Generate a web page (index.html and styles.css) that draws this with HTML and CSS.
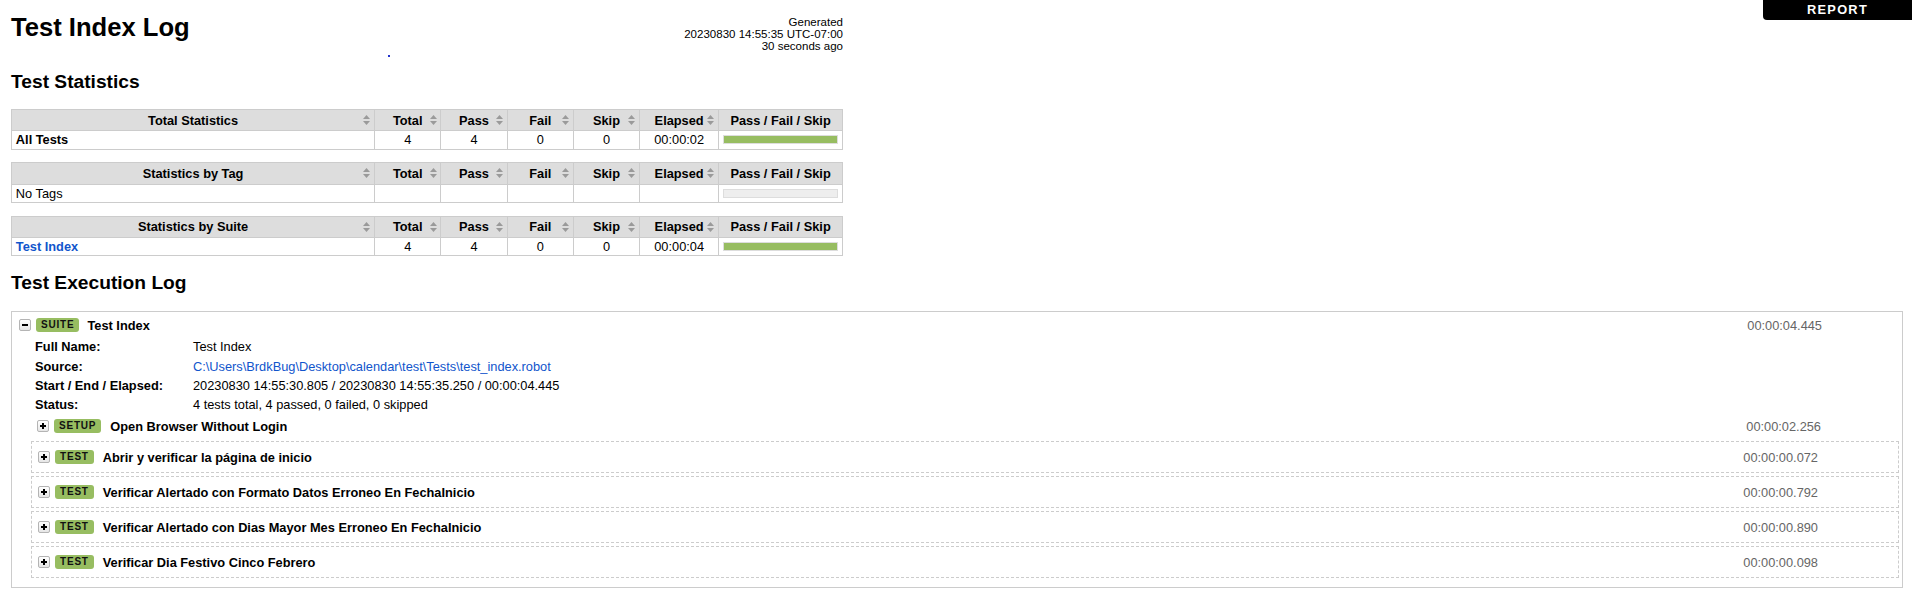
FILE: index.html
```html
<!DOCTYPE html>
<html lang="en">
<head>
<meta charset="utf-8">
<title>Test Index Log</title>
<link rel="stylesheet" href="styles.css">
</head>
<body>
<div class="top-right"><a class="report-link" href="#">REPORT</a></div>

<div class="header">
  <h1>Test Index Log</h1>
  <span class="dot"></span>
  <div class="generated">Generated<br>20230830 14:55:35 UTC-07:00<br>30 seconds ago</div>
</div>

<h2>Test Statistics</h2>

<table class="statistics">
  <thead>
    <tr>
      <th class="col-name"><div class="th-in"><span></span><span>Total Statistics</span><svg class="sort" viewBox="0 0 7 10"><path d="M3.5 0L7 4H0z M0 6H7L3.5 10z"/></svg></div></th>
      <th class="col-stat"><div class="th-in"><span></span><span>Total</span><svg class="sort" viewBox="0 0 7 10"><path d="M3.5 0L7 4H0z M0 6H7L3.5 10z"/></svg></div></th>
      <th class="col-stat"><div class="th-in"><span></span><span>Pass</span><svg class="sort" viewBox="0 0 7 10"><path d="M3.5 0L7 4H0z M0 6H7L3.5 10z"/></svg></div></th>
      <th class="col-stat"><div class="th-in"><span></span><span>Fail</span><svg class="sort" viewBox="0 0 7 10"><path d="M3.5 0L7 4H0z M0 6H7L3.5 10z"/></svg></div></th>
      <th class="col-stat"><div class="th-in"><span></span><span>Skip</span><svg class="sort" viewBox="0 0 7 10"><path d="M3.5 0L7 4H0z M0 6H7L3.5 10z"/></svg></div></th>
      <th class="col-elapsed"><div class="th-in"><span></span><span>Elapsed</span><svg class="sort" viewBox="0 0 7 10"><path d="M3.5 0L7 4H0z M0 6H7L3.5 10z"/></svg></div></th>
      <th class="col-graph">Pass / Fail / Skip</th>
    </tr>
  </thead>
  <tbody>
    <tr>
      <td class="stat-name"><b>All Tests</b></td>
      <td class="num">4</td><td class="num">4</td><td class="num">0</td><td class="num">0</td>
      <td class="num">00:00:02</td>
      <td><div class="graph"><div class="pass-bar"></div></div></td>
    </tr>
  </tbody>
</table>

<table class="statistics">
  <thead>
    <tr>
      <th class="col-name"><div class="th-in"><span></span><span>Statistics by Tag</span><svg class="sort" viewBox="0 0 7 10"><path d="M3.5 0L7 4H0z M0 6H7L3.5 10z"/></svg></div></th>
      <th class="col-stat"><div class="th-in"><span></span><span>Total</span><svg class="sort" viewBox="0 0 7 10"><path d="M3.5 0L7 4H0z M0 6H7L3.5 10z"/></svg></div></th>
      <th class="col-stat"><div class="th-in"><span></span><span>Pass</span><svg class="sort" viewBox="0 0 7 10"><path d="M3.5 0L7 4H0z M0 6H7L3.5 10z"/></svg></div></th>
      <th class="col-stat"><div class="th-in"><span></span><span>Fail</span><svg class="sort" viewBox="0 0 7 10"><path d="M3.5 0L7 4H0z M0 6H7L3.5 10z"/></svg></div></th>
      <th class="col-stat"><div class="th-in"><span></span><span>Skip</span><svg class="sort" viewBox="0 0 7 10"><path d="M3.5 0L7 4H0z M0 6H7L3.5 10z"/></svg></div></th>
      <th class="col-elapsed"><div class="th-in"><span></span><span>Elapsed</span><svg class="sort" viewBox="0 0 7 10"><path d="M3.5 0L7 4H0z M0 6H7L3.5 10z"/></svg></div></th>
      <th class="col-graph">Pass / Fail / Skip</th>
    </tr>
  </thead>
  <tbody>
    <tr>
      <td class="stat-name">No Tags</td>
      <td class="num"></td><td class="num"></td><td class="num"></td><td class="num"></td>
      <td class="num"></td>
      <td><div class="graph empty"></div></td>
    </tr>
  </tbody>
</table>

<table class="statistics">
  <thead>
    <tr>
      <th class="col-name"><div class="th-in"><span></span><span>Statistics by Suite</span><svg class="sort" viewBox="0 0 7 10"><path d="M3.5 0L7 4H0z M0 6H7L3.5 10z"/></svg></div></th>
      <th class="col-stat"><div class="th-in"><span></span><span>Total</span><svg class="sort" viewBox="0 0 7 10"><path d="M3.5 0L7 4H0z M0 6H7L3.5 10z"/></svg></div></th>
      <th class="col-stat"><div class="th-in"><span></span><span>Pass</span><svg class="sort" viewBox="0 0 7 10"><path d="M3.5 0L7 4H0z M0 6H7L3.5 10z"/></svg></div></th>
      <th class="col-stat"><div class="th-in"><span></span><span>Fail</span><svg class="sort" viewBox="0 0 7 10"><path d="M3.5 0L7 4H0z M0 6H7L3.5 10z"/></svg></div></th>
      <th class="col-stat"><div class="th-in"><span></span><span>Skip</span><svg class="sort" viewBox="0 0 7 10"><path d="M3.5 0L7 4H0z M0 6H7L3.5 10z"/></svg></div></th>
      <th class="col-elapsed"><div class="th-in"><span></span><span>Elapsed</span><svg class="sort" viewBox="0 0 7 10"><path d="M3.5 0L7 4H0z M0 6H7L3.5 10z"/></svg></div></th>
      <th class="col-graph">Pass / Fail / Skip</th>
    </tr>
  </thead>
  <tbody>
    <tr>
      <td class="stat-name"><a href="#"><b>Test Index</b></a></td>
      <td class="num">4</td><td class="num">4</td><td class="num">0</td><td class="num">0</td>
      <td class="num">00:00:04</td>
      <td><div class="graph"><div class="pass-bar"></div></div></td>
    </tr>
  </tbody>
</table>

<h2 class="exec-title">Test Execution Log</h2>

<div class="suite">
  <div class="el-header">
    <span class="toggle"><svg viewBox="0 0 8 8"><rect x="1" y="3" width="6" height="2"/></svg></span>
    <span class="label">SUITE</span>
    <span class="name">Test Index</span>
    <span class="elapsed">00:00:04.445</span>
  </div>
  <table class="metadata">
    <tr><th>Full Name:</th><td>Test Index</td></tr>
    <tr><th>Source:</th><td><a href="#">C:\Users\BrdkBug\Desktop\calendar\test\Tests\test_index.robot</a></td></tr>
    <tr><th>Start / End / Elapsed:</th><td>20230830 14:55:30.805 / 20230830 14:55:35.250 / 00:00:04.445</td></tr>
    <tr><th>Status:</th><td>4 tests total, 4 passed, 0 failed, 0 skipped</td></tr>
  </table>
  <div class="children">
    <div class="kw">
      <div class="el-header">
        <span class="toggle"><svg viewBox="0 0 8 8"><rect x="1" y="3" width="6" height="2"/><rect x="3" y="1" width="2" height="6"/></svg></span>
        <span class="label">SETUP</span>
        <span class="name">Open Browser Without Login</span>
        <span class="elapsed">00:00:02.256</span>
      </div>
    </div>
    <div class="test">
      <div class="el-header">
        <span class="toggle"><svg viewBox="0 0 8 8"><rect x="1" y="3" width="6" height="2"/><rect x="3" y="1" width="2" height="6"/></svg></span>
        <span class="label">TEST</span>
        <span class="name">Abrir y verificar la página de inicio</span>
        <span class="elapsed">00:00:00.072</span>
      </div>
    </div>
    <div class="test">
      <div class="el-header">
        <span class="toggle"><svg viewBox="0 0 8 8"><rect x="1" y="3" width="6" height="2"/><rect x="3" y="1" width="2" height="6"/></svg></span>
        <span class="label">TEST</span>
        <span class="name">Verificar Alertado con Formato Datos Erroneo En FechaInicio</span>
        <span class="elapsed">00:00:00.792</span>
      </div>
    </div>
    <div class="test">
      <div class="el-header">
        <span class="toggle"><svg viewBox="0 0 8 8"><rect x="1" y="3" width="6" height="2"/><rect x="3" y="1" width="2" height="6"/></svg></span>
        <span class="label">TEST</span>
        <span class="name">Verificar Alertado con Dias Mayor Mes Erroneo En FechaInicio</span>
        <span class="elapsed">00:00:00.890</span>
      </div>
    </div>
    <div class="test">
      <div class="el-header">
        <span class="toggle"><svg viewBox="0 0 8 8"><rect x="1" y="3" width="6" height="2"/><rect x="3" y="1" width="2" height="6"/></svg></span>
        <span class="label">TEST</span>
        <span class="name">Verificar Dia Festivo Cinco Febrero</span>
        <span class="elapsed">00:00:00.098</span>
      </div>
    </div>
  </div>
</div>
</body>
</html>
```

FILE: styles.css
```css
body {
  margin: 0;
  padding: 0 9px 0 11px;
  font-family: "Liberation Sans", Arial, Helvetica, sans-serif;
  font-size: 12.8px;
  color: #000;
  background: #fff;
}

a, a:link, a:visited {
  color: #15c;
  text-decoration: none;
}

/* top right link */
.top-right {
  position: fixed;
  top: 0;
  right: 0;
  width: 149px;
  z-index: 10;
}
.report-link, .report-link:link, .report-link:visited {
  display: block;
  height: 20px;
  line-height: 19px;
  background: #000;
  color: #fff;
  text-align: center;
  font-weight: bold;
  letter-spacing: 0.1em;
  border-bottom-left-radius: 4px;
}

/* header */
.header {
  position: relative;
  box-sizing: border-box;
  width: 832px;
  height: 55px;
  padding-top: 13px;
  display: flex;
  justify-content: space-between;
  align-items: flex-start;
}
.header h1 {
  margin: 0;
  font-size: 25.6px;
  font-weight: bold;
}
.generated {
  margin-top: 3px;
  text-align: right;
  font-size: 11.52px;
  white-space: nowrap;
}
.dot {
  position: absolute;
  left: 377px;
  top: 55px;
  width: 2px;
  height: 2px;
  background: #2233cc;
}

h2 {
  font-size: 19.2px;
  font-weight: bold;
  margin: 16px 0;
}

/* statistics */
.statistics {
  width: 832px;
  border-collapse: collapse;
  table-layout: fixed;
  margin-bottom: 12.8px;
}
.statistics th,
.statistics td {
  border: 1px solid #ccc;
  padding: 0.1em 0.3em;
  vertical-align: middle;
}
.statistics th {
  background: #ddd;
  padding: 0.2em 0.3em;
  font-weight: bold;
  white-space: nowrap;
}
.col-stat { width: 4.5em; }
.col-elapsed { width: 5.5em; }
.col-graph { width: 9em; text-align: center; }
.th-in {
  display: grid;
  grid-template-columns: 7px 1fr 7px;
  align-items: center;
  text-align: center;
}
.sort {
  width: 7px;
  height: 10px;
  fill: #9a9a9a;
  display: block;
}
.num { text-align: center; }
.stat-name b { font-weight: bold; }
.graph {
  border: 1px solid #ddd;
  height: 7px;
  background: #f4f4f4;
}
.graph.empty { background: #eee; }
.pass-bar {
  height: 100%;
  width: 100%;
  background: #97bd61;
}

/* execution log */
.exec-title {
  margin-bottom: 17px;
}
.suite {
  border: 1px solid #ccc;
  padding: 2px 3px 6px 4px;
}
.el-header {
  display: flex;
  align-items: center;
  height: 16px;
  padding: 3px 0 3px 3px;
}
.toggle {
  box-sizing: border-box;
  flex: none;
  width: 12px;
  height: 12px;
  border: 1px solid #b4b4b4;
  border-radius: 2px;
  background: linear-gradient(#fff, #e6e6e6);
  display: flex;
  align-items: center;
  justify-content: center;
}
.toggle svg {
  width: 8px;
  height: 8px;
  display: block;
  fill: #000;
}
.label {
  flex: none;
  margin-left: 5px;
  margin-right: 9px;
  height: 14px;
  line-height: 14px;
  padding: 0 5px;
  font-size: 10px;
  font-weight: bold;
  letter-spacing: 0.08em;
  background: #97bd61;
  color: #111;
  border-radius: 3px;
}
.suite > .el-header .label { margin-right: 8px; }
.name {
  font-weight: bold;
  white-space: nowrap;
}
.elapsed {
  margin-left: auto;
  padding-right: 77px;
  color: #666;
  white-space: nowrap;
}

.metadata {
  border-collapse: collapse;
  margin: 1px 0 0 19px;
}
.metadata th,
.metadata td {
  padding: 2px 0;
  line-height: 15.2px;
  vertical-align: top;
  text-align: left;
}
.metadata th {
  width: 158px;
  font-weight: bold;
}

.children {
  margin-left: 15px;
}
.kw {
  border: 1px solid transparent;
  padding: 0 0 0 2px;
  margin-bottom: 3px;
}
.test {
  border: 1px dashed #ccc;
  padding: 4px 3px;
  margin: 3px 0;
}
.test > .el-header { padding-right: 0; }
```
